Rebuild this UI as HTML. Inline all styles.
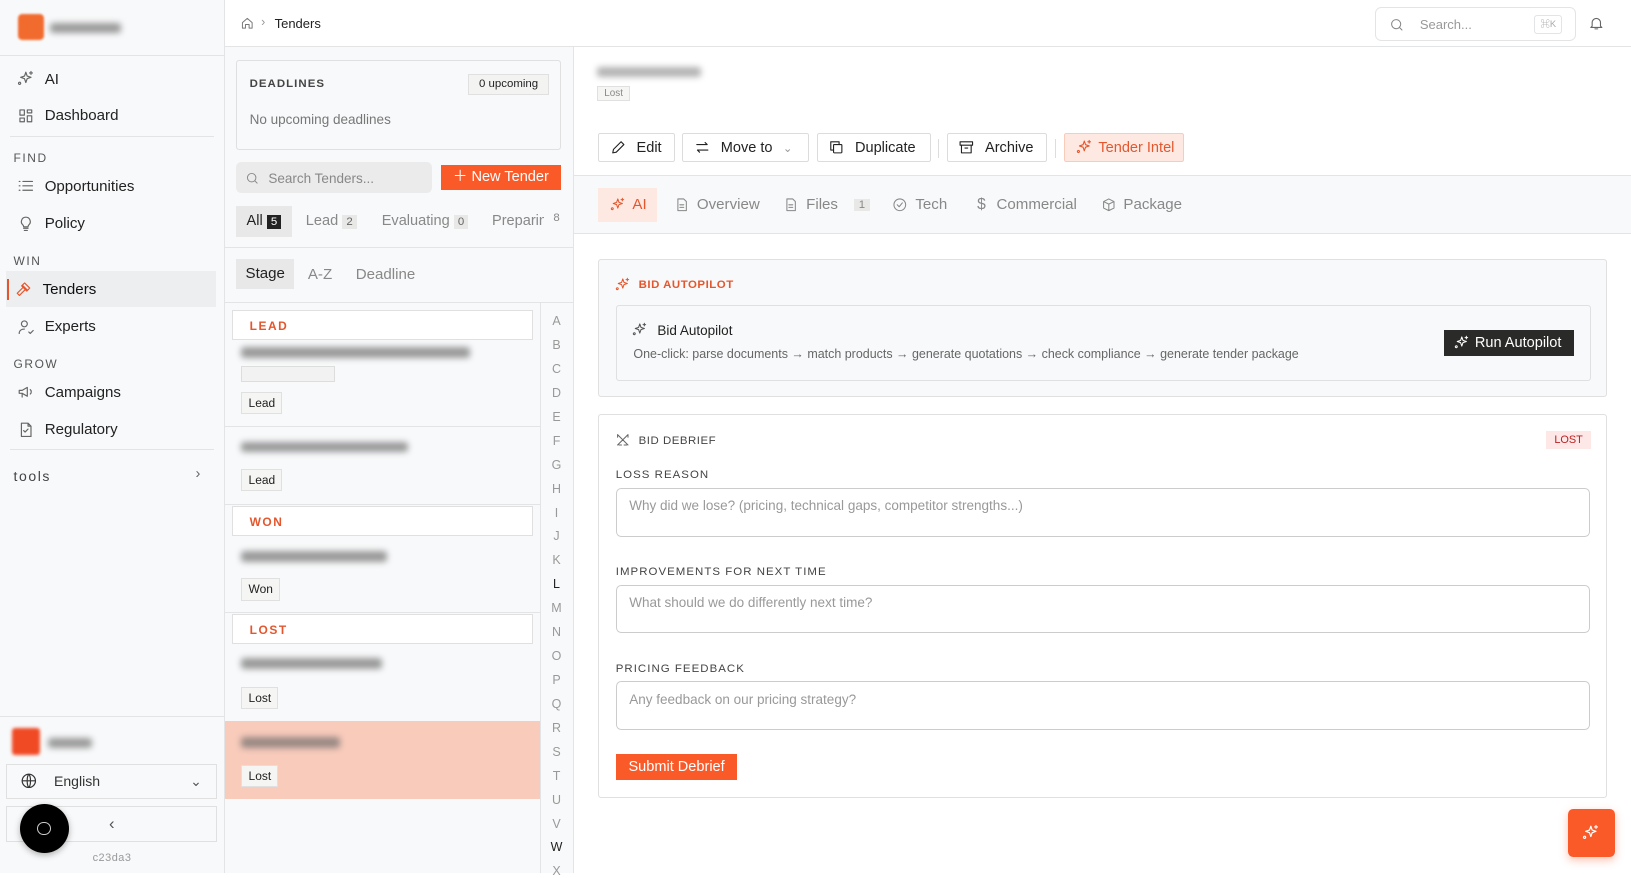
<!DOCTYPE html>
<html><head><meta charset="utf-8"><style>
html{zoom:1.0402}
*{box-sizing:border-box;margin:0;padding:0}
body{width:1568px;height:839px;overflow:hidden;font-family:"Liberation Sans","Noto Sans CJK SC",sans-serif;color:#222;background:#fff;position:relative;font-size:14px}
.a{position:absolute}
svg{fill:none;stroke:currentColor;stroke-width:1.6;stroke-linecap:round;stroke-linejoin:round}
.side{left:0;top:0;width:216px;height:839px;background:#f8f9fa;border-right:1px solid #e3e4e6}
.nav{left:8px;width:200px;height:34px;display:flex;align-items:center;padding-left:8px;font-size:14.5px;color:#222;gap:10px}
.nav svg{width:17px;height:17px;color:#666}
.sec{left:13px;font-size:11.5px;letter-spacing:1.5px;color:#555}
.blur{filter:blur(3px);background:#666;height:10px;border-radius:3px;opacity:.65}
.mid{left:216px;top:45px;width:336px;height:794px;background:#f8f9fa;border-right:1px solid #e3e4e6}
.tag{display:inline-block;border:1px solid #e0e0e0;background:#f5f5f3;font-size:11.5px;padding:3px 6px;color:#222}
.grp{left:7px;width:289px;height:29px;background:#fff;border:1px solid #e0e0e0;color:#e4572e;font-size:11.5px;font-weight:bold;letter-spacing:1.5px;padding:8px 0 0 16px}
.btn{top:83px;height:28px;border:1px solid #dcdcdc;background:#fff;display:flex;align-items:center;gap:10px;padding:0 8px 0 10px;font-size:14px;border-radius:2px;white-space:nowrap;overflow:hidden}
.btn svg{width:16px;height:16px;flex:none}
.tab{top:181px;height:30px;display:flex;align-items:center;gap:7px;font-size:14.5px;color:#888;white-space:nowrap}
.tab svg{width:15px;height:15px}
.lbl{left:16px;font-size:11px;letter-spacing:1px;color:#444}
.ta{left:16px;width:937px;height:47px;border:1px solid #ccc;border-radius:5px;color:#999;font-size:13px;padding:9px 12px}
.letter{left:519px;width:32px;text-align:center;font-size:12px;color:#999}
</style></head><body>
<svg width="0" height="0" style="position:absolute"><defs><symbol id="sp" viewBox="0 0 24 24"><path d="M12 3l1.8 5.2L19 10l-5.2 1.8L12 17l-1.8-5.2L5 10l5.2-1.8z"/><path d="M19 2v4M17 4h4M5 18a1.5 1.5 0 1 0 0 .1"/></symbol></defs></svg>

<div class="a side">
  <div class="a" style="left:17px;top:13px;width:25px;height:25px;background:#f26b2e;border-radius:4px;filter:blur(1px)"></div>
  <div class="a blur" style="left:48px;top:22px;width:68px"></div>
  <div class="a" style="left:0;top:53px;width:215px;border-top:1px solid #e3e4e6"></div>
  <div class="a nav" style="top:59px"><svg viewBox="0 0 24 24"><use href="#sp"/></svg>AI</div>
  <div class="a nav" style="top:94px"><svg viewBox="0 0 24 24"><rect x="4" y="4" width="6" height="7"/><rect x="14" y="4" width="6" height="4"/><rect x="14" y="12" width="6" height="8"/><rect x="4" y="15" width="6" height="5"/></svg>Dashboard</div>
  <div class="a" style="left:10px;top:131px;width:196px;border-top:1px solid #e3e4e6"></div>
  <div class="a sec" style="top:145px">FIND</div>
  <div class="a nav" style="top:162px"><svg viewBox="0 0 24 24"><path d="M8 6h13M8 12h13M8 18h13M3 6h1M3 12h1M3 18h1"/></svg>Opportunities</div>
  <div class="a nav" style="top:198px"><svg viewBox="0 0 24 24"><path d="M9 18h6M10 21h4M12 3a6 6 0 0 0-4 10.5c.7.7 1 1.5 1 2.5h6c0-1 .3-1.8 1-2.5A6 6 0 0 0 12 3z"/></svg>Policy</div>
  <div class="a sec" style="top:244px">WIN</div>
  <div class="a nav" style="top:261px;background:#eceeef;width:202px;left:6px;color:#111"><svg viewBox="0 0 24 24" style="color:#e4572e"><path d="M14 13l-8 8-3-3 8-8M13 4l7 7M10 7l7 7M12 5l-3 3 7 7 3-3"/></svg>Tenders</div>
  <div class="a" style="left:7px;top:268px;width:2px;height:20px;background:#e4572e"></div>
  <div class="a nav" style="top:297px"><svg viewBox="0 0 24 24"><circle cx="10" cy="8" r="4"/><path d="M3 21c0-4 3-6 7-6M16 19l2 2 4-4"/></svg>Experts</div>
  <div class="a sec" style="top:343px">GROW</div>
  <div class="a nav" style="top:360px"><svg viewBox="0 0 24 24"><path d="M3 10v4h4l7 4V6L7 10zM7 14v5M18 9a4 4 0 0 1 0 6"/></svg>Campaigns</div>
  <div class="a nav" style="top:396px"><svg viewBox="0 0 24 24"><path d="M6 3h9l4 4v14H6zM15 3v4h4M9 13l2 2 4-4"/></svg>Regulatory</div>
  <div class="a" style="left:10px;top:432px;width:196px;border-top:1px solid #e3e4e6"></div>
  <div class="a" style="left:13px;top:450px;font-size:13.5px;letter-spacing:1.5px;color:#444">tools</div>
  <div class="a" style="left:188px;top:448px;color:#666;font-size:14px">›</div>
  <div class="a" style="left:0;top:688px;width:215px;border-top:1px solid #e3e4e6"></div>
  <div class="a" style="left:12px;top:700px;width:26px;height:26px;background:#f04a25;border-radius:3px;filter:blur(1.5px)"></div>
  <div class="a blur" style="left:46px;top:709px;width:42px"></div>
  <div class="a" style="left:6px;top:734px;width:203px;height:34px;border:1px solid #e0e0e0;background:#f8f9fa;display:flex;align-items:center;padding-left:12px;gap:16px;font-size:13.5px;color:#333"><svg viewBox="0 0 24 24" style="width:17px;height:17px"><circle cx="12" cy="12" r="9"/><path d="M3 12h18M12 3c3 3 3 15 0 18M12 3c-3 3-3 15 0 18"/></svg>English<span style="margin-left:auto;margin-right:14px;color:#555">⌄</span></div>
  <div class="a" style="left:6px;top:775px;width:203px;height:34px;border:1px solid #e0e0e0;text-align:center;line-height:32px;color:#555;font-size:16px">‹</div>
  <div class="a" style="left:19px;top:773px;width:47px;height:47px;border-radius:50%;background:#000;box-shadow:0 2px 6px rgba(0,0,0,.3)"><div class="a" style="left:17px;top:17px;width:13px;height:13px;border-radius:50%;border:1.3px solid #ccc"></div></div>
  <div class="a" style="left:89px;top:819px;font-size:10.5px;color:#999;letter-spacing:.5px">c23da3</div>
</div>

<div class="a" style="left:216px;top:0;width:1352px;height:45px;border-bottom:1px solid #e3e4e6;background:#fff">
  <svg class="a" viewBox="0 0 24 24" style="left:15px;top:15px;width:14px;height:14px;color:#777"><path d="M4 11l8-7 8 7v9h-5v-6H9v6H4z"/></svg>
  <div class="a" style="left:35px;top:14px;color:#999;font-size:12px">›</div>
  <div class="a" style="left:48px;top:15px;font-size:12.5px">Tenders</div>
  <div class="a" style="left:1106px;top:7px;width:193px;height:32px;border:1px solid #e3e4e6;border-radius:6px">
    <svg class="a" viewBox="0 0 24 24" style="left:12px;top:8px;width:15px;height:15px;color:#888"><circle cx="11" cy="11" r="7"/><path d="M16 16l4 4"/></svg>
    <div class="a" style="left:42px;top:8px;color:#999;font-size:12.5px">Search...</div>
    <div class="a" style="left:152px;top:6px;width:27px;height:19px;border:1px solid #e3e4e6;border-radius:3px;font-size:9px;color:#aaa;text-align:center;line-height:17px">⌘K</div>
  </div>
  <svg class="a" viewBox="0 0 24 24" style="left:1311px;top:14px;width:16px;height:16px;color:#666"><path d="M6 16V11a6 6 0 0 1 12 0v5l2 2H4zM10 20h4"/></svg>
</div>

<div class="a mid">
  <div class="a" style="left:11px;top:13px;width:312px;height:86px;border:1px solid #e0e0e0;border-radius:3px">
    <div class="a" style="left:12px;top:16px;font-size:11px;font-weight:bold;letter-spacing:1px;color:#444">DEADLINES</div>
    <div class="a" style="left:222px;top:12px;width:78px;height:20px;border:1px solid #e0e0e0;background:#f3f3f2;font-size:11px;text-align:center;line-height:18px">0 upcoming</div>
    <div class="a" style="left:12px;top:49px;font-size:13px;color:#777">No upcoming deadlines</div>
  </div>
  <div class="a" style="left:11px;top:111px;width:188px;height:30px;background:#ebebeb;border-radius:5px">
    <svg class="a" viewBox="0 0 24 24" style="left:9px;top:8px;width:14px;height:14px;color:#888"><circle cx="11" cy="11" r="7"/><path d="M16 16l4 4"/></svg>
    <div class="a" style="left:31px;top:8px;color:#888;font-size:13px">Search Tenders...</div>
  </div>
  <div class="a" style="left:208px;top:114px;width:115px;height:24px;background:#fa5a28;color:#fff;font-size:14px;line-height:24px;text-align:center">＋ New Tender</div>
  <div class="a" style="left:11px;top:153px;width:54px;height:30px;background:#e8e8e8"></div>
  <div class="a" style="left:21px;top:160px;font-size:14px">All <span style="background:#222;color:#fff;font-size:11px;padding:1px 4px">5</span></div>
  <div class="a" style="left:78px;top:160px;font-size:14px;color:#888">Lead <span style="background:#e8e8e6;color:#666;font-size:11px;padding:1px 4px">2</span></div>
  <div class="a" style="left:151px;top:160px;font-size:14px;color:#888">Evaluating <span style="background:#e8e8e6;color:#666;font-size:11px;padding:1px 4px">0</span></div>
  <div class="a" style="left:257px;top:160px;font-size:14px;color:#888;width:50px;overflow:hidden;white-space:nowrap">Preparing</div>
  <div class="a" style="left:316px;top:159px;font-size:11px;color:#888">8</div>
  <div class="a" style="left:0;top:192px;width:335px;border-top:1px solid #e3e4e6"></div>
  <div class="a" style="left:11px;top:204px;width:56px;height:29px;background:#e8e8e8;font-size:14.5px;text-align:center;line-height:29px">Stage</div>
  <div class="a" style="left:80px;top:211px;font-size:14.5px;color:#888">A-Z</div>
  <div class="a" style="left:126px;top:211px;font-size:14.5px;color:#888">Deadline</div>
  <div class="a" style="left:0;top:245px;width:335px;border-top:1px solid #e3e4e6"></div>
  <div class="a" style="left:303px;top:245px;height:549px;border-left:1px solid #e3e4e6"></div>

  <div class="a grp" style="top:253px">LEAD</div>
  <div class="a blur" style="left:16px;top:289px;width:220px"></div>
  <div class="a" style="left:16px;top:307px;width:90px;height:15px;border:1px solid #ddd;background:#f2f2f2"></div>
  <div class="a tag" style="left:16px;top:332px">Lead</div>
  <div class="a" style="left:0;top:365px;width:303px;border-top:1px solid #e3e4e6"></div>
  <div class="a blur" style="left:16px;top:380px;width:160px"></div>
  <div class="a tag" style="left:16px;top:406px">Lead</div>
  <div class="a" style="left:0;top:440px;width:303px;border-top:1px solid #e3e4e6"></div>
  <div class="a grp" style="top:441px">WON</div>
  <div class="a blur" style="left:16px;top:485px;width:140px"></div>
  <div class="a tag" style="left:16px;top:511px">Won</div>
  <div class="a" style="left:0;top:543px;width:303px;border-top:1px solid #e3e4e6"></div>
  <div class="a grp" style="top:545px">LOST</div>
  <div class="a blur" style="left:16px;top:588px;width:135px"></div>
  <div class="a tag" style="left:16px;top:615px">Lost</div>
  <div class="a" style="left:0;top:648px;width:303px;height:75px;background:#f8cbbb"></div>
  <div class="a blur" style="left:16px;top:664px;width:95px"></div>
  <div class="a tag" style="left:16px;top:690px">Lost</div>
</div>
<div class="a letter" style="top:302px">A</div><div class="a letter" style="top:325px">B</div><div class="a letter" style="top:348px">C</div><div class="a letter" style="top:371px">D</div><div class="a letter" style="top:394px">E</div><div class="a letter" style="top:417px">F</div><div class="a letter" style="top:440px">G</div><div class="a letter" style="top:463px">H</div><div class="a letter" style="top:486px">I</div><div class="a letter" style="top:509px">J</div><div class="a letter" style="top:532px">K</div><div class="a letter" style="top:555px;color:#222">L</div><div class="a letter" style="top:578px">M</div><div class="a letter" style="top:601px">N</div><div class="a letter" style="top:624px">O</div><div class="a letter" style="top:647px">P</div><div class="a letter" style="top:670px">Q</div><div class="a letter" style="top:693px">R</div><div class="a letter" style="top:716px">S</div><div class="a letter" style="top:739px">T</div><div class="a letter" style="top:762px">U</div><div class="a letter" style="top:785px">V</div><div class="a letter" style="top:808px;color:#222">W</div><div class="a letter" style="top:831px">X</div>

<div class="a" style="left:552px;top:45px;width:1016px;height:794px">
  <div class="a blur" style="left:22px;top:19px;width:100px;opacity:.5"></div>
  <div class="a tag" style="left:22px;top:38px;font-size:9.5px;padding:1px 6px;color:#888">Lost</div>
  <div class="a btn" style="left:23px;width:74px"><svg viewBox="0 0 24 24"><path d="M4 20l1-5L16 4l4 4L9 19z"/></svg>Edit</div>
  <div class="a btn" style="left:104px;width:122px"><svg viewBox="0 0 24 24"><path d="M4 8h15l-3-3M20 16H5l3 3"/></svg>Move to <span style="color:#999;font-size:11px">⌄</span></div>
  <div class="a btn" style="left:233px;width:110px"><svg viewBox="0 0 24 24"><rect x="8" y="8" width="12" height="12" rx="1"/><path d="M16 8V4H4v12h4"/></svg>Duplicate</div>
  <div class="a" style="left:350px;top:89px;height:18px;border-left:1px solid #ddd"></div>
  <div class="a btn" style="left:358px;width:97px"><svg viewBox="0 0 24 24"><rect x="3" y="4" width="18" height="5"/><path d="M5 9v11h14V9M10 13h4"/></svg>Archive</div>
  <div class="a" style="left:462px;top:89px;height:18px;border-left:1px solid #ddd"></div>
  <div class="a btn" style="left:471px;width:115px;background:#fde9e2;border-color:#f8cbbb;color:#e4572e;gap:6px"><svg viewBox="0 0 24 24"><use href="#sp"/></svg>Tender Intel</div>
  <div class="a" style="left:0;top:123px;width:1016px;height:57px;border-top:1px solid #e3e4e6;border-bottom:1px solid #e3e4e6;background:#f8f9fa"></div>
  <div class="a" style="left:23px;top:136px;width:57px;height:32px;background:#fde9e2"></div>
  <div class="a tab" style="left:34px;top:137px;color:#e4572e"><svg viewBox="0 0 24 24"><use href="#sp"/></svg>AI</div>
  <div class="a tab" style="left:96px;top:137px"><svg viewBox="0 0 24 24"><path d="M6 3h9l4 4v14H6zM9 12h6M9 16h6"/></svg>Overview</div>
  <div class="a tab" style="left:201px;top:137px"><svg viewBox="0 0 24 24"><path d="M6 3h9l4 4v14H6zM9 12h6M9 16h6"/></svg>Files <span style="background:#e8e8e6;font-size:11px;padding:0 5px;margin-left:8px">1</span></div>
  <div class="a tab" style="left:306px;top:137px"><svg viewBox="0 0 24 24"><circle cx="12" cy="12" r="9"/><path d="M8 12l3 3 5-6"/></svg>Tech</div>
  <div class="a tab" style="left:384px;top:137px"><span style="font-size:15px;width:15px;text-align:center">$</span>Commercial</div>
  <div class="a tab" style="left:506px;top:137px"><svg viewBox="0 0 24 24"><path d="M12 3l8 4v10l-8 4-8-4V7zM4 7l8 4 8-4M12 11v10"/></svg>Package</div>

  <div class="a" style="left:23px;top:204px;width:970px;height:133px;background:#f8f9fa;border:1px solid #e0e0e0;border-radius:3px">
    <svg class="a" viewBox="0 0 24 24" style="left:15px;top:16px;width:15px;height:15px;color:#e4572e"><use href="#sp"/></svg>
    <div class="a" style="left:38px;top:18px;font-size:11px;font-weight:bold;letter-spacing:.5px;color:#e4572e">BID AUTOPILOT</div>
    <div class="a" style="left:16px;top:43px;width:938px;height:73px;border:1px solid #e0e0e0;border-radius:3px">
      <svg class="a" viewBox="0 0 24 24" style="left:15px;top:16px;width:15px;height:15px;color:#555"><use href="#sp"/></svg>
      <div class="a" style="left:39px;top:17px;font-size:13px;color:#222">Bid Autopilot</div>
      <div class="a" style="left:16px;top:40px;font-size:12px;color:#666">One-click: parse documents → match products → generate quotations → check compliance → generate tender package</div>
      <div class="a" style="left:795px;top:23px;width:125px;height:25px;background:#2a2a28;color:#fff;font-size:14px;line-height:25px;padding-left:10px;display:flex;gap:5px;align-items:center"><svg viewBox="0 0 24 24" style="width:15px;height:15px"><use href="#sp"/></svg>Run Autopilot</div>
    </div>
  </div>

  <div class="a" style="left:23px;top:353px;width:970px;height:369px;border:1px solid #e0e0e0;border-radius:3px;background:#fff">
    <svg class="a" viewBox="0 0 24 24" style="left:15px;top:16px;width:15px;height:15px;color:#666"><path d="M4 4l16 16M20 4L4 20M4 4v4M20 4v4M6 20h4M14 20h4"/></svg>
    <div class="a" style="left:38px;top:19px;font-size:11px;letter-spacing:.5px;color:#444">BID DEBRIEF</div>
    <div class="a" style="left:910px;top:15px;width:44px;height:18px;background:#fde7e7;color:#b22;font-size:10.5px;text-align:center;line-height:18px">LOST</div>
    <div class="a lbl" style="top:52px">LOSS REASON</div>
    <div class="a ta" style="top:70px">Why did we lose? (pricing, technical gaps, competitor strengths...)</div>
    <div class="a lbl" style="top:145px">IMPROVEMENTS FOR NEXT TIME</div>
    <div class="a ta" style="top:163px">What should we do differently next time?</div>
    <div class="a lbl" style="top:238px">PRICING FEEDBACK</div>
    <div class="a ta" style="top:256px">Any feedback on our pricing strategy?</div>
    <div class="a" style="left:16px;top:326px;width:117px;height:25px;background:#fa5a28;color:#fff;font-size:14px;line-height:25px;text-align:center">Submit Debrief</div>
  </div>
</div>
<div class="a" style="left:1507px;top:778px;width:46px;height:46px;background:#fa5a28;border-radius:5px;box-shadow:0 3px 8px rgba(250,90,40,.35)"><svg viewBox="0 0 24 24" style="position:absolute;left:14px;top:14px;width:17px;height:17px;color:#fff"><use href="#sp"/></svg></div>
</body></html>
